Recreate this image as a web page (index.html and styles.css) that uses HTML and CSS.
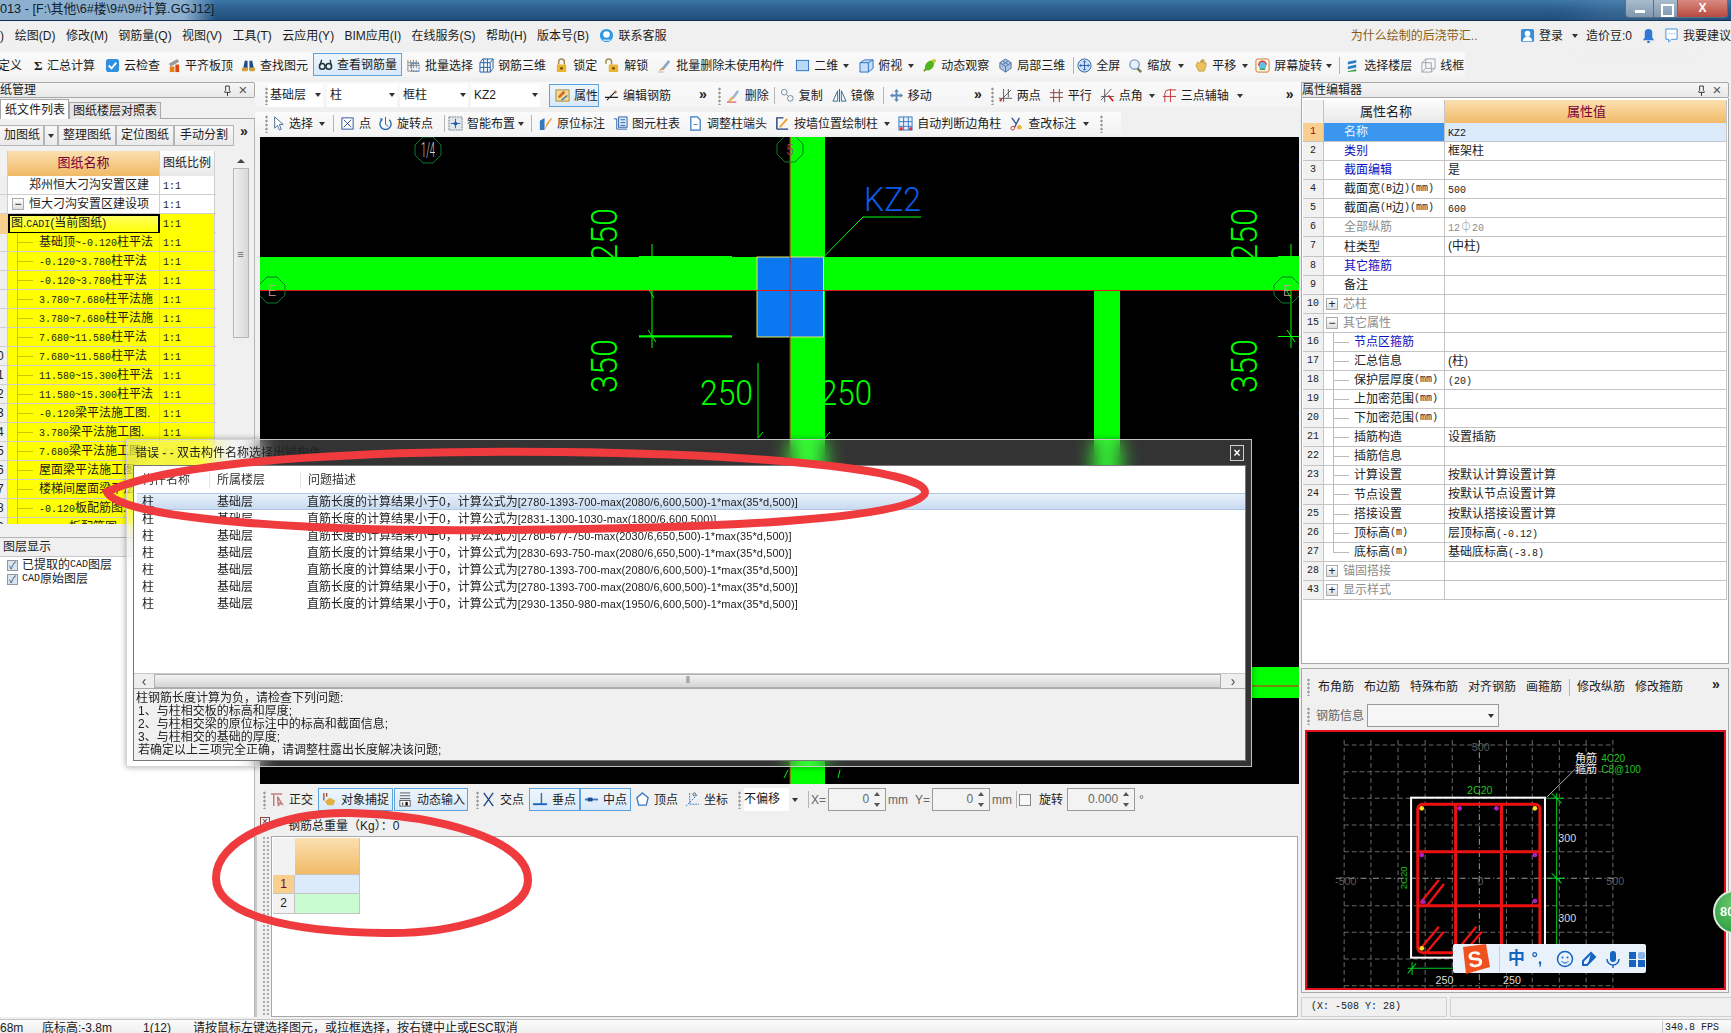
FILE: index.html
```html
<!DOCTYPE html>
<html lang="zh">
<head>
<meta charset="utf-8">
<title>GGJ2013</title>
<link rel="stylesheet" href="styles.css">
</head>
<body>
<svg class="defs" aria-hidden="true">
<symbol id="cloud" viewBox="0 0 16 16"><rect x="1" y="1" width="14" height="14" rx="3" fill="#2f8fe0"/><path d="M4 8l3 3 5-6" stroke="#fff" stroke-width="2" fill="none"/></symbol>
<symbol id="align" viewBox="0 0 16 16"><path d="M3 6l9-5 2 3-9 5z" fill="#9a9a9a"/><rect x="4" y="9" width="5" height="6" fill="#e8801a"/><rect x="10" y="7" width="4" height="8" fill="#d94a12"/></symbol>
<symbol id="binoc" viewBox="0 0 16 16"><path d="M2 13l2-10h3v10zM9 13V3h3l2 10z" fill="#1d4b8f"/><rect x="1" y="10" width="6" height="4" rx="1" fill="#d0a040"/><rect x="9" y="10" width="6" height="4" rx="1" fill="#d0a040"/></symbol>
<symbol id="glass" viewBox="0 0 16 16"><circle cx="4.500" cy="10" r="3" stroke="#233" stroke-width="1.600" fill="none"/><circle cx="11.500" cy="10" r="3" stroke="#233" stroke-width="1.600" fill="none"/><path d="M2 9l2-6M14 9l-1-6" stroke="#233" stroke-width="1.400"/></symbol>
<symbol id="batch" viewBox="0 0 16 16"><path d="M2 2v12h12M5 2v9M8 2v9M11 2v9M2 5h12M2 8h12" stroke="#8c8c8c" fill="none"/><rect x="6" y="6" width="8" height="8" stroke="#2a6fc0" fill="none" stroke-dasharray="2 1"/></symbol>
<symbol id="rebar3" viewBox="0 0 16 16"><path d="M1 5h11v10H1zM1 5l3-4h11l-3 4M15 1v10l-3 4M5 1v14M9 1v14M1 10h11" stroke="#1f5fa8" fill="none"/></symbol>
<symbol id="lock" viewBox="0 0 16 16"><path d="M5 7V4a3 3 0 016 0v3" stroke="#a08a50" stroke-width="1.600" fill="none"/><rect x="3" y="7" width="10" height="8" rx="1" fill="#eab530"/><circle cx="8" cy="11" r="1.500" fill="#7a4a00"/></symbol>
<symbol id="unlock" viewBox="0 0 16 16"><path d="M1 6V4a3 3 0 016 0v3" stroke="#a08a50" stroke-width="1.600" fill="none"/><rect x="4" y="7" width="10" height="8" rx="1" fill="#eab530"/><circle cx="9" cy="11" r="1.500" fill="#7a4a00"/></symbol>
<symbol id="erase" viewBox="0 0 16 16"><path d="M5 11l7-9 2 2-7 9z" fill="#8da3c8"/><path d="M2 14l3-4 2 2z" fill="#e89030"/><path d="M1 15h7" stroke="#bbb"/></symbol>
<symbol id="two" viewBox="0 0 16 16"><rect x="1.500" y="2.500" width="13" height="11" fill="#b8d8f5" stroke="#2a6fc0"/></symbol>
<symbol id="box" viewBox="0 0 16 16"><path d="M1 5l5-3h9v9l-5 4H1z" fill="#c6def5" stroke="#2a6fc0"/><path d="M1 5h9v10M10 5l5-3" stroke="#2a6fc0" fill="none"/></symbol>
<symbol id="orbit" viewBox="0 0 16 16"><path d="M2 14L13 2" stroke="#7a8a20" stroke-width="2"/><ellipse cx="8" cy="8" rx="4" ry="6" transform="rotate(40 8 8)" fill="#4fb51c"/><circle cx="13" cy="3" r="2" fill="#c8d020"/></symbol>
<symbol id="cube" viewBox="0 0 16 16"><path d="M8 1l6 4v6l-6 4-6-4V5z" fill="#a9c4e4" stroke="#52739e"/><path d="M2 5l6 4 6-4M8 9v6M5 3l6 4M11 3L5 7" stroke="#52739e" fill="none"/></symbol>
<symbol id="full" viewBox="0 0 16 16"><circle cx="8" cy="8" r="7" fill="#cfe1f5" stroke="#2a5fa8"/><path d="M8 3v10M3 8h10M6.500 4.500L8 3l1.500 1.500M6.500 11.500L8 13l1.500-1.500M4.500 6.500L3 8l1.500 1.500M11.500 6.500L13 8l-1.500 1.500" stroke="#2a5fa8" fill="none"/></symbol>
<symbol id="zoom" viewBox="0 0 16 16"><circle cx="7" cy="7" r="5" fill="#e8f1fb" stroke="#7f9cc0" stroke-width="1.500"/><path d="M10 11l4 4" stroke="#6a7c40" stroke-width="2.500"/></symbol>
<symbol id="hand" viewBox="0 0 16 16"><path d="M3 8l3 6h6l2-6V5l-2 1V2l-1.500 3V1L9 5V2L7 6 5 4z" fill="#eec25a" stroke="#9a7620" stroke-width=".5"/></symbol>
<symbol id="rot" viewBox="0 0 16 16"><rect x="1" y="1" width="14" height="14" rx="2" fill="#fdf5e8" stroke="#d07030"/><circle cx="8" cy="8" r="4" fill="#5cc0e8"/><path d="M4 8a4 4 0 018-1" stroke="#e03a30" stroke-width="1.500" fill="none"/><path d="M5 12h6" stroke="#3ca030" stroke-width="1.500"/></symbol>
<symbol id="floors" viewBox="0 0 16 16"><path d="M3 4l9-2v3L3 7zM3 9l9-2v3l-9 2z" fill="#2a80c8"/><path d="M3 14l9-2v2l-9 1z" fill="#2fa050"/></symbol>
<symbol id="wire" viewBox="0 0 16 16"><path d="M1 5h10v10H1zM1 5l4-4h10v10l-4 4M5 1v10h10M5 11l-4 4" stroke="#9aa5b0" fill="none"/></symbol>
<symbol id="prop" viewBox="0 0 16 16"><rect x="1" y="2" width="14" height="12" fill="#f2d890" stroke="#a88a40"/><path d="M3 9l6-6 2 2-6 6z" fill="#d06a20"/><path d="M7 13l6-5" stroke="#3a70b0" stroke-width="1.500"/></symbol>
<symbol id="editr" viewBox="0 0 16 16"><path d="M1 10h14M3 13L13 3" stroke="#222" stroke-width="1.200"/><path d="M11 2l3 3-2 1z" fill="#d08020"/></symbol>
<symbol id="del" viewBox="0 0 16 16"><path d="M6 10l6-8 2 2-6 8z" fill="#9db4d4"/><path d="M2 14l4-5 2 2-3 3z" fill="#eeb04a"/><path d="M1 15h10" stroke="#c33"/></symbol>
<symbol id="copy" viewBox="0 0 16 16"><circle cx="4.500" cy="4.500" r="3" stroke="#6a8aaa" fill="none"/><circle cx="11" cy="11" r="3" stroke="#6a8aaa" fill="none"/><path d="M7 7l2 2" stroke="#d08030"/></symbol>
<symbol id="mirror" viewBox="0 0 16 16"><path d="M8 1v14" stroke="#555"/><path d="M6 3v11H1zM10 3v11h5z" fill="none" stroke="#2a6f9f"/></symbol>
<symbol id="move" viewBox="0 0 16 16"><path d="M8 1l2.500 3H9v3h3V5.500L15 8l-3 2.500V9H9v3h1.500L8 15l-2.500-3H7V9H4v1.500L1 8l3-2.500V7h3V4H5.500z" fill="#5c88b5"/></symbol>
<symbol id="twop" viewBox="0 0 16 16"><path d="M2 14L14 2M6 1v14M1 11h14M11 1v9" stroke="#555" fill="none"/><path d="M2 14l2-2" stroke="#c33" stroke-width="2"/></symbol>
<symbol id="para" viewBox="0 0 16 16"><path d="M5 1v14M11 1v14M1 5h14M1 10h14" stroke="#8b3a3a" fill="none"/></symbol>
<symbol id="ang" viewBox="0 0 16 16"><path d="M1 13L12 1M5 1v14M1 9h14" stroke="#555" fill="none"/><path d="M9 8l5 6" stroke="#d02020" stroke-width="1.800"/></symbol>
<symbol id="three" viewBox="0 0 16 16"><path d="M3 15V6a4 4 0 014-4h8M9 1v14M1 9h14" stroke="#c63030" fill="none"/></symbol>
<symbol id="cursor" viewBox="0 0 16 16"><path d="M5 1v12l3-3 2 5 2-1-2-5h4z" fill="#fff" stroke="#4a6a90"/></symbol>
<symbol id="pt" viewBox="0 0 16 16"><rect x="2" y="2" width="12" height="12" fill="#fff" stroke="#2a4f9f"/><path d="M4 4l8 8M12 4l-8 8" stroke="#2a4f9f"/></symbol>
<symbol id="rotp" viewBox="0 0 16 16"><path d="M4 4a6 6 0 108 0" stroke="#2b6ca8" stroke-width="1.500" fill="none"/><path d="M8 1v8l3 2" stroke="#2b6ca8" fill="none"/><path d="M2 2l3 1-1 3z" fill="#2b6ca8"/></symbol>
<symbol id="smart" viewBox="0 0 16 16"><rect x="1" y="1" width="14" height="14" fill="#dfe8f0" stroke="#777" stroke-dasharray="2 1"/><path d="M8 3v10M3 8h10" stroke="#2a5fa8"/><circle cx="8" cy="8" r="2" fill="#2a5fa8"/></symbol>
<symbol id="note" viewBox="0 0 16 16"><path d="M2 15V5l5-3v13z" fill="#3478c0"/><path d="M7 15l2-7 5-6 1 1-5 7z" fill="#f0a030"/></symbol>
<symbol id="table" viewBox="0 0 16 16"><rect x="6" y="1" width="9" height="11" fill="#dce9f8" stroke="#2a5fa8"/><path d="M8 4h5M8 7h5M8 10h5" stroke="#2a5fa8"/><path d="M1 3h3v11h11" stroke="#2a5fa8" fill="none"/></symbol>
<symbol id="page" viewBox="0 0 16 16"><path d="M3 1h7l3 3v11H3z" fill="#fff" stroke="#3478c0" stroke-width="1.300"/><path d="M6 9h4" stroke="#3478c0"/></symbol>
<symbol id="wall" viewBox="0 0 16 16"><path d="M2 14V2h7M2 14h12" stroke="#223c80" fill="none" stroke-width="1.500"/><path d="M5 12l8-9" stroke="#eda020" stroke-width="2"/></symbol>
<symbol id="auto" viewBox="0 0 16 16"><rect x="1" y="1" width="14" height="14" fill="#e8f0fa" stroke="#3478c0"/><path d="M1 6h14M1 11h14M6 1v14M11 1v14" stroke="#3478c0"/><rect x="2" y="12" width="3" height="3" fill="#d33"/><rect x="12" y="12" width="3" height="3" fill="#d33"/></symbol>
<symbol id="chk" viewBox="0 0 16 16"><path d="M3 2l5 7M11 2L6 12" stroke="#35558a" stroke-width="1.500"/><circle cx="4" cy="13" r="2" fill="none" stroke="#c33"/><circle cx="11" cy="12" r="2.500" fill="#eab530"/></symbol>
<symbol id="ortho" viewBox="0 0 16 16"><path d="M1 2h12M4 2v13M8 5l5 8-3-1-1 3z" stroke="#c08080" stroke-width="1.600" fill="none"/></symbol>
<symbol id="snap" viewBox="0 0 16 16"><path d="M2 1v8M5 1v4" stroke="#a05030" stroke-width="1.400"/><path d="M3 10l5-4 6 3-2 5H6z" fill="#e2b040"/></symbol>
<symbol id="dyn" viewBox="0 0 16 16"><path d="M2 1h11M2 4h11M2 7h11" stroke="#555" fill="none"/><rect x="2" y="9" width="11" height="6" fill="#fff" stroke="#555"/><path d="M5 11v3M8 11h2v3H8" stroke="#222"/></symbol>
<symbol id="cross" viewBox="0 0 16 16"><path d="M3 1l10 14M13 1L3 15" stroke="#234a8a" stroke-width="1.500"/></symbol>
<symbol id="perp" viewBox="0 0 16 16"><path d="M9 1v12" stroke="#4a6a8a" stroke-width="1.500"/><path d="M0 13h15" stroke="#1864c0" stroke-width="2"/></symbol>
<symbol id="mid" viewBox="0 0 16 16"><path d="M1 8h14" stroke="#3478c0" stroke-width="2"/><rect x="4" y="6" width="5" height="4" fill="#1d4b8f"/></symbol>
<symbol id="vert" viewBox="0 0 16 16"><path d="M8 1l6 5-2 8H4L2 6z" fill="#fff" stroke="#3478c0" stroke-width="1.400"/></symbol>
<symbol id="coord" viewBox="0 0 16 16"><path d="M5 1v12h10" stroke="#3478c0" fill="none" stroke-dasharray="2 1"/><path d="M1 15L13 3" stroke="#3478c0" stroke-dasharray="2 1"/><circle cx="10" cy="2.500" r="1.500" fill="none" stroke="#555"/></symbol>
<symbol id="pin" viewBox="0 0 10 12"><path d="M3 1h4v5l1 1v1H2V7l1-1zM5 8v4" stroke="#222" fill="#fff"/></symbol>
</svg>

<div class="app">
  <header class="title">
    <div class="title-glass">013 - [F:\其他\6#楼\9#\9#计算.GGJ12]</div>
    <div class="winctl"><span class="w-min"></span><span class="w-max"></span><span class="w-close">X</span></div>
  </header>

  <nav class="menu">
    <span class="mi-cut">)</span>
    <span class="mi">绘图(D)</span><span class="mi">修改(M)</span><span class="mi">钢筋量(Q)</span><span class="mi">视图(V)</span><span class="mi">工具(T)</span><span class="mi">云应用(Y)</span><span class="mi">BIM应用(I)</span><span class="mi">在线服务(S)</span><span class="mi">帮助(H)</span><span class="mi">版本号(B)</span>
    <span class="mi svc"><svg class="ic" viewBox="0 0 16 16"><circle cx="8" cy="8" r="7" fill="#2f9ae0"/><circle cx="8" cy="7" r="3.500" fill="#fff"/><path d="M4 13h8" stroke="#fff"/></svg>联系客服</span>
    <span class="news">为什么绘制的后浇带汇..</span>
    <span class="login"><svg class="ic" viewBox="0 0 16 16"><rect x="1" y="1" width="14" height="14" rx="2" fill="#3c8ed8"/><circle cx="8" cy="6" r="3" fill="#fff"/><path d="M3 14a5 5 0 0110 0z" fill="#fff"/></svg>登录</span><i class="ar m9"></i>
    <span class="beans">造价豆:0</span>
    <svg class="ic bell" viewBox="0 0 16 16"><path d="M8 1a4 4 0 00-4 4v5l-2 3h12l-2-3V5a4 4 0 00-4-4z" fill="#2f78d8"/><circle cx="8" cy="15" r="1.500" fill="#2f78d8"/></svg>
    <span class="suggest"><svg class="ic" viewBox="0 0 16 16"><path d="M2 1h12v11H8l-3 3v-3H2z" fill="#fff" stroke="#3c8ed8"/><path d="M5 6h1M8 6h1M11 6h1" stroke="#3c8ed8"/></svg>我要建议</span>
  </nav>

  <div class="tb1"><div class="tb1-in">
    <span class="ti cut">定义</span>
    <span class="ti m12"><b class="sigma">Σ</b>汇总计算</span>
    <span class="ti m10"><svg class="ic"><use href="#cloud"/></svg>云检查</span>
    <span class="ti m6"><svg class="ic"><use href="#align"/></svg>平齐板顶</span>
    <span class="ti m8"><svg class="ic"><use href="#binoc"/></svg>查找图元</span>
    <span class="ti btn m5"><svg class="ic"><use href="#glass"/></svg>查看钢筋量</span>
    <span class="ti m4"><svg class="ic"><use href="#batch"/></svg>批量选择</span>
    <span class="ti m6"><svg class="ic"><use href="#rebar3"/></svg>钢筋三维</span>
    <span class="ti m8"><svg class="ic"><use href="#lock"/></svg>锁定</span>
    <span class="ti m8"><svg class="ic"><use href="#unlock"/></svg>解锁</span>
    <span class="ti m9"><svg class="ic"><use href="#erase"/></svg>批量删除未使用构件</span>
    <span class="ti m11"><svg class="ic"><use href="#two"/></svg>二维</span><i class="ar m5"></i>
    <span class="ti m10"><svg class="ic"><use href="#box"/></svg>俯视</span><i class="ar m6"></i>
    <span class="ti m8"><svg class="ic"><use href="#orbit"/></svg>动态观察</span>
    <span class="ti m9"><svg class="ic"><use href="#cube"/></svg>局部三维</span>
    <i class="sep m8"></i>
    <span class="ti m3"><svg class="ic"><use href="#full"/></svg>全屏</span>
    <span class="ti m8"><svg class="ic"><use href="#zoom"/></svg>缩放</span><i class="ar m7"></i>
    <span class="ti m9"><svg class="ic"><use href="#hand"/></svg>平移</span><i class="ar m6"></i>
    <span class="ti m7"><svg class="ic"><use href="#rot"/></svg>屏幕旋转</span><i class="ar m4"></i>
    <i class="sep m7"></i>
    <span class="ti m5"><svg class="ic"><use href="#floors"/></svg>选择楼层</span>
    <span class="ti m9"><svg class="ic"><use href="#wire"/></svg>线框</span>
  </div></div>

  <main class="main">
    <aside class="left">
      <div class="ph"><span class="ph-t cutl">纸管理</span><svg class="pin" viewBox="0 0 10 12"><use href="#pin"/></svg><span class="ph-x">×</span></div>
      <div class="tabs"><span class="tab on">纸文件列表</span><span class="tab">图纸楼层对照表</span></div>
      <div class="ltb"><span class="lb b1">加图纸</span><span class="lb b2"><i class="ar"></i></span><span class="lb b3">整理图纸</span><span class="lb b3">定位图纸</span><span class="lb b3 b4">手动分割</span><span class="more">»</span></div>
      <div class="sheet">
        <div class="sgrid">
          <div class="sr sh"><i class="rn"></i><span class="sn">图纸名称</span><span class="ss">图纸比例</span></div>
          <div class="sr"><i class="rn"></i><span class="sn l1">郑州恒大刁沟安置区建</span><span class="ss"><u>1:1</u></span></div>
          <div class="sr"><i class="rn"></i><span class="sn l1"><i class="tog">−</i>恒大刁沟安置区建设项</span><span class="ss"><u>1:1</u></span></div>
          <div class="sr y cur"><i class="rn"></i><span class="sn l0">图.<u>CADI</u>(当前图纸)</span><span class="ss"><u>1:1</u></span></div>
          <div class="sr y"><i class="rn"></i><span class="sn ch">基础顶<u>~-0.120</u>柱平法</span><span class="ss"><u>1:1</u></span></div>
          <div class="sr y"><i class="rn"></i><span class="sn ch"><u>-0.120~3.780</u>柱平法</span><span class="ss"><u>1:1</u></span></div>
          <div class="sr y"><i class="rn"></i><span class="sn ch"><u>-0.120~3.780</u>柱平法</span><span class="ss"><u>1:1</u></span></div>
          <div class="sr y"><i class="rn"></i><span class="sn ch"><u>3.780~7.680</u>柱平法施</span><span class="ss"><u>1:1</u></span></div>
          <div class="sr y"><i class="rn"></i><span class="sn ch"><u>3.780~7.680</u>柱平法施</span><span class="ss"><u>1:1</u></span></div>
          <div class="sr y"><i class="rn"></i><span class="sn ch"><u>7.680~11.580</u>柱平法</span><span class="ss"><u>1:1</u></span></div>
          <div class="sr y"><i class="rn">0</i><span class="sn ch"><u>7.680~11.580</u>柱平法</span><span class="ss"><u>1:1</u></span></div>
          <div class="sr y"><i class="rn">1</i><span class="sn ch"><u>11.580~15.300</u>柱平法</span><span class="ss"><u>1:1</u></span></div>
          <div class="sr y"><i class="rn">2</i><span class="sn ch"><u>11.580~15.300</u>柱平法</span><span class="ss"><u>1:1</u></span></div>
          <div class="sr y"><i class="rn">3</i><span class="sn ch"><u>-0.120</u>梁平法施工图.</span><span class="ss"><u>1:1</u></span></div>
          <div class="sr y"><i class="rn">4</i><span class="sn ch"><u>3.780</u>梁平法施工图.</span><span class="ss"><u>1:1</u></span></div>
          <div class="sr y"><i class="rn">5</i><span class="sn ch"><u>7.680</u>梁平法施工图.</span><span class="ss"><u>1:1</u></span></div>
          <div class="sr y"><i class="rn">6</i><span class="sn ch">屋面梁平法施工图</span><span class="ss"><u>1:1</u></span></div>
          <div class="sr y"><i class="rn">7</i><span class="sn ch">楼梯间屋面梁平法</span><span class="ss"><u>1:1</u></span></div>
          <div class="sr y"><i class="rn">8</i><span class="sn ch"><u>-0.120</u>板配筋图.</span><span class="ss"><u>1:1</u></span></div>
          <div class="sr y"><i class="rn">9</i><span class="sn ch"><u>3.780</u>板配筋图.</span><span class="ss"><u>1:1</u></span></div>
        </div>
        <div class="vscroll"><i class="up"></i><i class="thumb">≡</i></div>
      </div>
      <div class="ph ph2"><span class="ph-t">图层显示</span></div>
      <div class="layers">
        <label class="lay"><i class="cb">✓</i>已提取的<u>CAD</u>图层</label>
        <label class="lay"><i class="cb">✓</i><u>CAD</u>原始图层</label>
      </div>
    </aside>

    <section class="center">
      <div class="bar r2">
        <i class="grip g10"></i>
        <span class="combo c1">基础层<i class="ar"></i></span><span class="combo c2">柱<i class="ar"></i></span><span class="combo c3">框柱<i class="ar"></i></span><span class="combo c4">KZ2<i class="ar"></i></span>
        <span class="ti btn m9 bp"><svg class="ic"><use href="#prop"/></svg>属性</span>
        <span class="ti m5"><svg class="ic"><use href="#editr"/></svg>编辑钢筋</span>
        <span class="more m28">»</span>
        <i class="grip m11"></i>
        <span class="ti m5"><svg class="ic"><use href="#del"/></svg>删除</span><i class="sep m5"></i>
        <span class="ti m5"><svg class="ic"><use href="#copy"/></svg>复制</span>
        <span class="ti m9"><svg class="ic"><use href="#mirror"/></svg>镜像</span><i class="sep m8"></i>
        <span class="ti m5"><svg class="ic"><use href="#move"/></svg>移动</span>
        <span class="more m42">»</span>
        <i class="grip m9"></i>
        <span class="ti m4"><svg class="ic"><use href="#twop"/></svg>两点</span>
        <span class="ti m8"><svg class="ic"><use href="#para"/></svg>平行</span>
        <span class="ti m8"><svg class="ic"><use href="#ang"/></svg>点角</span><i class="ar m6"></i>
        <span class="ti m7"><svg class="ic"><use href="#three"/></svg>三点辅轴</span><i class="ar m8"></i>
        <span class="more m43">»</span>
      </div>
      <div class="bar r3">
        <i class="grip g11"></i>
        <span class="ti m2"><svg class="ic"><use href="#cursor"/></svg>选择</span><i class="ar m6"></i><i class="sep m8"></i>
        <span class="ti m6"><svg class="ic"><use href="#pt"/></svg>点</span>
        <span class="ti m7"><svg class="ic"><use href="#rotp"/></svg>旋转点</span><i class="sep m11"></i>
        <span class="ti m3"><svg class="ic"><use href="#smart"/></svg>智能布置</span><i class="ar m3"></i><i class="sep m7"></i>
        <span class="ti m6"><svg class="ic"><use href="#note"/></svg>原位标注</span>
        <span class="ti m8"><svg class="ic"><use href="#table"/></svg>图元柱表</span>
        <span class="ti m8"><svg class="ic"><use href="#page"/></svg>调整柱端头</span>
        <span class="ti m8"><svg class="ic"><use href="#wall"/></svg>按墙位置绘制柱</span><i class="ar m6"></i>
        <span class="ti m8"><svg class="ic"><use href="#auto"/></svg>自动判断边角柱</span>
        <span class="ti m8"><svg class="ic"><use href="#chk"/></svg>查改标注</span><i class="ar m7"></i>
        <i class="grip m11"></i>
      </div>

      <svg class="cad" viewBox="260 137 1039 647" width="1039" height="647">
        <defs><polygon id="oct" points="-5,-13 5,-13 13,-5 13,5 5,13 -5,13 -13,5 -13,-5" fill="none" stroke="#0a7a2a"/></defs>
        <g fill="#00ff00">
          <rect x="260" y="257" width="1040" height="34"/>
          <rect x="639" y="256" width="93" height="3"/>
          <rect x="790" y="137" width="35" height="647"/>
          <rect x="1094" y="291" width="26" height="210"/>
          <rect x="1252" y="667" width="48" height="31"/>
          <rect x="1278" y="256" width="22" height="3"/>
        </g>
        <rect x="757" y="257" width="66.500" height="80" fill="#0a78f0" stroke="#e8e860"/>
        <path d="M260 290.500H1300M790 137V784M1252 686H1300" stroke="#e01818" fill="none"/>
        <g stroke="#00ff00" fill="none">
          <path d="M652 244V348M639 336H732" />
          <path d="M639 336.500H732" stroke-width="2"/>
          <path d="M648 330L656 342M648 288L654 298M1285 288L1291 298M1287 330L1295 342"/>
          <path d="M758 363V438M825 438L830 432M758 438L763 432"/>
          <path d="M1291 244V348M1278 336.500H1300" />
          <path d="M823.500 257L863 217H921" stroke-width="1"/>
          <path d="M788 770L784 778M840 770L838 778"/>
        </g>
        <g fill="#00ff00" class="cad-l">
          <text transform="translate(617,262) rotate(-90)" font-size="37" textLength="54" lengthAdjust="spacingAndGlyphs">250</text>
          <text transform="translate(617,393) rotate(-90)" font-size="37" textLength="54" lengthAdjust="spacingAndGlyphs">350</text>
          <text transform="translate(1257,262) rotate(-90)" font-size="37" textLength="54" lengthAdjust="spacingAndGlyphs">250</text>
          <text transform="translate(1257,393) rotate(-90)" font-size="37" textLength="54" lengthAdjust="spacingAndGlyphs">350</text>
          <text x="700" y="405" font-size="35" textLength="53" lengthAdjust="spacingAndGlyphs">250</text>
          <text x="820" y="405" font-size="35" textLength="52" lengthAdjust="spacingAndGlyphs">250</text>
        </g>
        <text x="864" y="211" font-size="34" textLength="57" lengthAdjust="spacingAndGlyphs" fill="#0a5ce6" class="cad-l">KZ2</text>
        <use href="#oct" x="428" y="150"/><use href="#oct" x="790" y="149"/><use href="#oct" x="272" y="290"/><use href="#oct" x="1287" y="290"/>
        <text x="428" y="157" font-size="20" text-anchor="middle" fill="#ddd" textLength="14" lengthAdjust="spacingAndGlyphs" class="cad-l">1/4</text>
        <text x="790" y="155" font-size="15" text-anchor="middle" fill="#a04878" class="cad-l">5</text>
        <text x="272" y="296" font-size="15" text-anchor="middle" fill="#c8a0a0" class="cad-l">E</text>
        <text x="1287" y="296" font-size="15" text-anchor="middle" fill="#c8a0a0" class="cad-l">E</text>
      </svg>

      <div class="bar r4">
        <i class="grip g8"></i>
        <span class="ti m4"><svg class="ic"><use href="#ortho"/></svg>正交</span>
        <span class="ti btn m5 w75"><svg class="ic ic-a"><use href="#snap"/></svg>对象捕捉</span>
        <span class="ti btn m1 w74"><svg class="ic ic-a"><use href="#dyn"/></svg>动态输入</span>
        <i class="grip m8"></i>
        <span class="ti m2"><svg class="ic"><use href="#cross"/></svg>交点</span>
        <span class="ti btn m5 w51"><svg class="ic ic-a"><use href="#perp"/></svg>垂点</span>
        <span class="ti btn w51"><svg class="ic ic-a"><use href="#mid"/></svg>中点</span>
        <span class="ti m4"><svg class="ic"><use href="#vert"/></svg>顶点</span>
        <span class="ti m7"><svg class="ic"><use href="#coord"/></svg>坐标</span>
        <i class="grip m10"></i>
        <span class="combo c5 m3">不偏移</span><i class="ar m3"></i><i class="sep m10"></i>
        <span class="lbl m2">X=</span><span class="spin m2 s58">0<i class="sp"></i></span><span class="lbl m2">mm</span>
        <span class="lbl m7">Y=</span><span class="spin m2 s58">0<i class="sp"></i></span><span class="lbl m2">mm</span>
        <i class="sep m4"></i><i class="box m2"></i>
        <span class="lbl blk m8">旋转</span><span class="spin m4 s68">0.000<i class="sp"></i></span><span class="lbl m4">°</span>
      </div>
      <div class="wline"><i class="xbox">×</i><span class="wtxt">钢筋总重量（Kg）：0</span></div>
      <div class="tablerow">
        <i class="dots"></i>
        <div class="tpanel">
          <div class="tg">
            <i class="tc th0"></i><i class="tc th1"></i>
            <i class="tc n1">1</i><i class="tc v1"></i>
            <i class="tc n2">2</i><i class="tc v2"></i>
          </div>
        </div>
      </div>
    </section>

    <aside class="right">
      <div class="ph rp"><span class="ph-t">属性编辑器</span><svg class="pin" viewBox="0 0 10 12"><use href="#pin"/></svg><span class="ph-x">×</span></div>
      <div class="pbox">
        <div class="pgrid">
          <div class="pr phd"><span class="pn"></span><span class="pk">属性名称</span><span class="pv">属性值</span></div>
          <div class="pr sel"><span class="pn">1</span><span class="pk">名称</span><span class="pv"><u>KZ2</u></span></div>
          <div class="pr"><span class="pn">2</span><span class="pk bl">类别</span><span class="pv">框架柱</span></div>
          <div class="pr"><span class="pn">3</span><span class="pk bl">截面编辑</span><span class="pv">是</span></div>
          <div class="pr"><span class="pn">4</span><span class="pk">截面宽<u>(B</u>边<u>)(mm)</u></span><span class="pv"><u>500</u></span></div>
          <div class="pr"><span class="pn">5</span><span class="pk">截面高<u>(H</u>边<u>)(mm)</u></span><span class="pv"><u>600</u></span></div>
          <div class="pr"><span class="pn">6</span><span class="pk gr">全部纵筋</span><span class="pv gr"><u>12</u>⏀<u>20</u></span></div>
          <div class="pr"><span class="pn">7</span><span class="pk">柱类型</span><span class="pv">(中柱)</span></div>
          <div class="pr"><span class="pn">8</span><span class="pk bl">其它箍筋</span><span class="pv"></span></div>
          <div class="pr"><span class="pn">9</span><span class="pk">备注</span><span class="pv"></span></div>
          <div class="pr"><span class="pn">10</span><span class="pk gr"><i class="tog">+</i>芯柱</span><span class="pv"></span></div>
          <div class="pr"><span class="pn">15</span><span class="pk gr"><i class="tog">−</i>其它属性</span><span class="pv"></span></div>
          <div class="pr"><span class="pn">16</span><span class="pk kid bl">节点区箍筋</span><span class="pv"></span></div>
          <div class="pr"><span class="pn">17</span><span class="pk kid">汇总信息</span><span class="pv">(柱)</span></div>
          <div class="pr"><span class="pn">18</span><span class="pk kid">保护层厚度<u>(mm)</u></span><span class="pv"><u>(20)</u></span></div>
          <div class="pr"><span class="pn">19</span><span class="pk kid">上加密范围<u>(mm)</u></span><span class="pv"></span></div>
          <div class="pr"><span class="pn">20</span><span class="pk kid">下加密范围<u>(mm)</u></span><span class="pv"></span></div>
          <div class="pr"><span class="pn">21</span><span class="pk kid">插筋构造</span><span class="pv">设置插筋</span></div>
          <div class="pr"><span class="pn">22</span><span class="pk kid">插筋信息</span><span class="pv"></span></div>
          <div class="pr"><span class="pn">23</span><span class="pk kid">计算设置</span><span class="pv">按默认计算设置计算</span></div>
          <div class="pr"><span class="pn">24</span><span class="pk kid">节点设置</span><span class="pv">按默认节点设置计算</span></div>
          <div class="pr"><span class="pn">25</span><span class="pk kid">搭接设置</span><span class="pv">按默认搭接设置计算</span></div>
          <div class="pr"><span class="pn">26</span><span class="pk kid">顶标高<u>(m)</u></span><span class="pv">层顶标高<u>(-0.12)</u></span></div>
          <div class="pr"><span class="pn">27</span><span class="pk kid last">底标高<u>(m)</u></span><span class="pv">基础底标高<u>(-3.8)</u></span></div>
          <div class="pr"><span class="pn">28</span><span class="pk gr"><i class="tog">+</i>锚固搭接</span><span class="pv"></span></div>
          <div class="pr"><span class="pn">43</span><span class="pk gr"><i class="tog">+</i>显示样式</span><span class="pv"></span></div>
        </div>
      </div>
      <div class="rebar">
        <div class="rb-tb"><i class="grip"></i><span>布角筋</span><span>布边筋</span><span>特殊布筋</span><span>对齐钢筋</span><span>画箍筋</span><i class="sep"></i><span>修改纵筋</span><span>修改箍筋</span><span class="more rb-more">»</span></div>
        <div class="rb-tb2"><i class="grip"></i><span class="rb-l">钢筋信息</span><span class="rb-combo"><i class="ar"></i></span></div>
        <svg class="rb-cv" viewBox="54 216 1246 768" preserveAspectRatio="none">
          <g stroke="#6a6a6a" stroke-width="3" stroke-dasharray="14 9" fill="none">
            <path d="M165 240V985M245 240V985M326 240V985M407 240V985M488 240V985M650 240V985M727 240V985M808 240V985M888 240V985M968 240V985"/>
            <path d="M165 255H968M165 335H968M165 415H968M165 495H968M165 575H968M165 737H968M165 817H968M165 897H968M165 977H968"/>
          </g>
          <path d="M569 240V985M140 655H985" stroke="#999" stroke-width="3" stroke-dasharray="18 8 3 8" fill="none"/>
          <g class="cad-t" fill="#5c5c5c" font-size="32" text-anchor="middle">
            <text x="573" y="273">500</text><text x="170" y="675">-500</text><text x="572" y="675">0</text><text x="975" y="675">500</text>
          </g>
          <rect x="365" y="413" width="400" height="480" fill="none" stroke="#fff" stroke-width="6"/>
          <path d="M770 412L855 328" stroke="#fff" stroke-width="2"/>
          <g fill="none" stroke="#ee1111" stroke-width="9">
            <rect x="385" y="433" width="365" height="445" rx="14"/>
            <path d="M498 433V878M635 433V878M385 575H750M385 737H750"/>
            <path d="M392 730L448 660M412 738L463 672M392 868L448 800M412 876L463 815M505 868L560 800M525 876L577 815" stroke-width="7"/>
          </g>
          <g fill="#ffe020"><circle cx="397" cy="445" r="7"/><circle cx="735" cy="445" r="7"/><circle cx="397" cy="865" r="7"/></g>
          <g fill="#b020c8"><circle cx="510" cy="445" r="7"/><circle cx="620" cy="445" r="7"/><circle cx="397" cy="585" r="7"/><circle cx="735" cy="585" r="7"/><circle cx="400" cy="725" r="7"/><circle cx="735" cy="723" r="7"/></g>
          <g stroke="#00d020" stroke-width="3" fill="none"><path d="M800 400V860M775 415H820M775 655H825M355 925H495M368 905V945M785 400L815 430M785 640L815 670M355 940L380 910"/></g>
          <g class="cad-t" font-size="32">
            <text x="805" y="546" fill="#ddd">300</text><text x="805" y="786" fill="#ddd">300</text>
            <text x="438" y="972" fill="#ddd">250</text><text x="640" y="972" fill="#ddd">250</text>
            <text x="532" y="402" fill="#22c022">2C20</text>
            <text transform="translate(354,688) rotate(-90)" fill="#22c022" font-size="29">2C20</text>
            <text x="933" y="305" fill="#22c022" font-size="30">4C20</text>
            <text x="933" y="339" fill="#22c022" font-size="30">C8@100</text>
          </g>
          <g class="cad-c" font-size="33" fill="#eee"><text x="855" y="306">角筋</text><text x="855" y="340">箍筋</text></g>
        </svg>
      </div>
      <div class="coords"><span class="co1">(X: -508 Y: 28)</span><span class="co2"></span></div>
    </aside>
  </main>

  <footer class="status">
    <span class="st st0">68m</span><span class="st st1">底标高:-3.8m</span><span class="st st2">1(12)</span>
    <span class="st st3">请按鼠标左键选择图元，或拉框选择，按右键中止或ESC取消</span>
    <span class="st st4">340.8 FPS</span>
  </footer>

  <div class="dialog">
    <div class="dl-title"><span>错误 - - 双击构件名称选择出错构件</span><i class="dl-x">×</i></div>
    <div class="dl-in">
      <div class="dl-list">
        <div class="dl-h"><span class="c-a">构件名称</span><span class="c-b">所属楼层</span><span class="c-c">问题描述</span></div>
        <div class="dl-r on"><span class="c-a">柱</span><span class="c-b">基础层</span><span class="c-c">直筋长度的计算结果小于0，计算公式为<b class="f">[2780-1393-700-max(2080/6,600,500)-1*max(35*d,500)]</b></span></div>
        <div class="dl-r"><span class="c-a">柱</span><span class="c-b">基础层</span><span class="c-c">直筋长度的计算结果小于0，计算公式为<b class="f">[2831-1300-1030-max(1800/6,600,500)]</b></span></div>
        <div class="dl-r"><span class="c-a">柱</span><span class="c-b">基础层</span><span class="c-c">直筋长度的计算结果小于0，计算公式为<b class="f">[2780-677-750-max(2030/6,650,500)-1*max(35*d,500)]</b></span></div>
        <div class="dl-r"><span class="c-a">柱</span><span class="c-b">基础层</span><span class="c-c">直筋长度的计算结果小于0，计算公式为<b class="f">[2830-693-750-max(2080/6,650,500)-1*max(35*d,500)]</b></span></div>
        <div class="dl-r"><span class="c-a">柱</span><span class="c-b">基础层</span><span class="c-c">直筋长度的计算结果小于0，计算公式为<b class="f">[2780-1393-700-max(2080/6,600,500)-1*max(35*d,500)]</b></span></div>
        <div class="dl-r"><span class="c-a">柱</span><span class="c-b">基础层</span><span class="c-c">直筋长度的计算结果小于0，计算公式为<b class="f">[2780-1393-700-max(2080/6,600,500)-1*max(35*d,500)]</b></span></div>
        <div class="dl-r"><span class="c-a">柱</span><span class="c-b">基础层</span><span class="c-c">直筋长度的计算结果小于0，计算公式为<b class="f">[2930-1350-980-max(1950/6,600,500)-1*max(35*d,500)]</b></span></div>
      </div>
      <div class="dl-sc"><i class="dl-l">‹</i><i class="dl-th">⦀</i><i class="dl-rr">›</i></div>
      <div class="dl-msg">
        <p>柱钢筋长度计算为负，请检查下列问题:</p>
        <p class="ind">1、与柱相交板的标高和厚度;</p>
        <p class="ind">2、与柱相交梁的原位标注中的标高和截面信息;</p>
        <p class="ind">3、与柱相交的基础的厚度;</p>
        <p class="ind">若确定以上三项完全正确，请调整柱露出长度解决该问题;</p>
      </div>
    </div>
  </div>

  <svg class="scrawl" viewBox="0 0 1731 1033" width="1731" height="1033" aria-hidden="true">
    <path d="M107 492C180 457 400 450 560 452C760 454 925 470 925 492C925 512 800 528 500 530C320 532 120 520 107 492Z"/>
    <path d="M216 878C216 840 280 812 350 813C440 815 528 840 528 880C528 915 450 934 385 933C290 932 216 915 216 878Z"/>
  </svg>

  <div class="ime">
    <svg class="ime-s" viewBox="0 0 32 30"><path d="M5 3L28 0l4 23-24 7z" fill="#f0501e"/><text x="10" y="23" font-size="22" font-weight="700" fill="#fff" class="cad-t" transform="rotate(-10 16 16)">S</text></svg>
    <i class="ime-d"></i>
    <span class="ime-t">中</span><span class="ime-p">°,</span>
    <svg class="ime-i" viewBox="0 0 18 18"><circle cx="9" cy="9" r="7.500" fill="none" stroke="#1565c0" stroke-width="1.500"/><circle cx="6.500" cy="7.500" r="1" fill="#1565c0"/><circle cx="11.500" cy="7.500" r="1" fill="#1565c0"/><path d="M5.500 11a4 4 0 007 0" stroke="#1565c0" fill="none"/></svg>
    <svg class="ime-i" viewBox="0 0 18 18"><path d="M3 11L11 3l4 4-8 8H3z" fill="none" stroke="#1565c0" stroke-width="2"/><path d="M8 14l7-7-4-4z" fill="#1565c0"/></svg>
    <svg class="ime-i" viewBox="0 0 18 18"><rect x="6" y="1" width="6" height="11" rx="3" fill="#1565c0"/><path d="M3 9a6 6 0 0012 0M9 15v3" stroke="#1565c0" fill="none" stroke-width="1.500"/></svg>
    <svg class="ime-i" viewBox="0 0 18 18"><rect x="1" y="2" width="7" height="7" fill="#1565c0"/><rect x="10" y="2" width="7" height="7" rx="2" fill="#89b4e8"/><rect x="1" y="10" width="7" height="7" fill="#1565c0"/><rect x="10" y="10" width="7" height="7" fill="#1565c0"/></svg>
  </div>
  <div class="ball">80</div>
</div>
</body>
</html>
```

FILE: styles.css
```css
* { box-sizing: border-box; }
html, body { margin: 0; padding: 0; }
body { width: 1731px; height: 1033px; overflow: hidden; background: #f0f0f0; color: #1c1c1c;
  font: 12px/16px "Liberation Sans", "Noto Sans CJK SC", sans-serif; }
i { font-style: normal; }
u { text-decoration: none; font-family: "Liberation Mono", "Noto Sans CJK SC", monospace; font-size: 10px; }
p { margin: 0; }
.defs { position: absolute; width: 0; height: 0; }
.app { position: relative; width: 1731px; height: 1033px; display: flex; flex-direction: column; overflow: hidden; }

/* margins */
.m1{margin-left:1px}.m2{margin-left:2px}.m3{margin-left:3px}.m4{margin-left:4px}.m5{margin-left:5px}.m6{margin-left:6px}.m7{margin-left:7px}.m8{margin-left:8px}.m9{margin-left:9px}.m10{margin-left:10px}.m11{margin-left:11px}.m12{margin-left:12px}.m28{margin-left:28px}.m42{margin-left:42px}.m43{margin-left:43px}

/* title */
.title { height: 21px; flex: none; display: flex; align-items: flex-start; border-bottom: 1px solid #0e2f50;
  background: linear-gradient(#3d76a8, #2a5d8c 50%, #214f7c); }
.title-glass { width: 216px; height: 20px; line-height: 18px; font-size: 12.7px; color: #10202c; white-space: nowrap;
  background: linear-gradient(90deg, #8db0ce 85%, rgba(141,176,206,0)); }
.winctl { margin-left: auto; margin-right: 3px; display: flex; height: 18px; border: 1px solid #56708a; border-top: 0; border-radius: 0 0 4px 4px; overflow: hidden;
  box-shadow: -40px 0 40px rgba(180,210,235,.35); }
.w-min, .w-max { width: 28px; background: linear-gradient(#a9bccd, #7f97ad); border-right: 1px solid #56708a; position: relative; }
.w-max { width: 24px; }
.w-min::after { content: ""; position: absolute; left: 9px; top: 10px; width: 10px; height: 3px; background: #fff; }
.w-max::after { content: ""; position: absolute; left: 7px; top: 4px; width: 9px; height: 9px; border: 2px solid #fff; }
.w-close { width: 49px; text-align: center; color: #fff; font-weight: 700; line-height: 16px; background: linear-gradient(#d88a80, #b84a40); }

/* menu */
.menu { height: 31px; flex: none; display: flex; align-items: center; background: #f0f0f0; white-space: nowrap; padding-bottom: 2px; }
.mi-cut { width: 15px; }
.mi { margin-right: 10.400px; }
.svc { display: flex; align-items: center; margin-left: 0; }
.ic { width: 15px; height: 15px; margin-right: 4px; flex: none; display: block; }
.news { margin-left: 674px; color: #8a5a10; width: 171px; }
.login { display: flex; align-items: center; }
.ar { display: inline-block; flex: none; width: 0; height: 0; border: 3px solid transparent; border-top: 4px solid #333; border-bottom: 0; }
.beans { margin-left: 8px; }
.bell { margin-left: 9px; margin-right: 0; }
.suggest { display: flex; align-items: center; margin-left: 8px; }

/* toolbars */
.tb1 { height: 30px; flex: none; padding-bottom: 5px; overflow: hidden; }
.tb1-in { width: 1465px; height: 25px; padding-top: 2px; display: flex; align-items: center; background: linear-gradient(#fafafa, #f4f4f4); white-space: nowrap; }
.ti { display: inline-flex; align-items: center; flex: none; white-space: nowrap; }
.cut { margin-left: -2px; }
.sigma { width: 13px; font: 700 13px "Liberation Serif", serif; margin-right: 0; }
.btn { height: 23px; padding: 0 4px 0 4px; border: 1px solid #5da2dc; background: linear-gradient(#eef6fd, #d8e9f9); }
.tb1-in .btn { margin-top: -2px; }
.sep { display: block; flex: none; width: 1px; height: 17px; background: #b5b5b5; }
.grip { display: block; flex: none; width: 3px; height: 18px; background-image: radial-gradient(#999 1px, transparent 1.2px); background-size: 3px 4px; }
.g8 { margin-left: 8px; } .g10 { margin-left: 10px; } .g11 { margin-left: 10px; }
.more { flex: none; font-weight: 700; font-size: 14px; line-height: 14px; color: #222; align-self: flex-start; margin-top: 3px; }

/* main */
.main { height: 937px; flex: none; display: flex; }
.left { width: 255px; flex: none; display: flex; flex-direction: column; }
.ph { height: 16px; flex: none; display: flex; align-items: center; border: 1px solid #a8a8a8; border-left: 0; border-radius: 0 2px 2px 0; background: linear-gradient(#f6f6f6, #e8e8e8); white-space: nowrap; }
.ph-t { flex: 1; line-height: 14px; }
.pin { width: 9px; height: 11px; flex: none; }
.ph-x { width: 22px; text-align: center; font-size: 15px; color: #555; line-height: 12px; flex: none; }
.tabs { height: 20px; flex: none; margin-top: 1px; display: flex; border-bottom: 1px solid #a8a8a8; }
.tab { padding: 1px 3px; border: 1px solid #a8a8a8; border-bottom: 0; background: #e6e6e6; height: 20px; width: 92px; text-align: center; white-space: nowrap; margin-top: 3px; height: 17px; line-height: 14px; }
.tab.on { width: 69px; background: #fff; margin-top: 0; height: 20px; text-align: right; line-height: 18px; }
.ltb { height: 30px; flex: none; display: flex; align-items: center; padding-top: 5px; padding-bottom: 2px; border-right: 1px solid #b5b5b5; }
.lb { height: 21px; line-height: 19px; border: 1px solid #b5b5b5; background: linear-gradient(#f8f8f8, #e9e9e9); display: flex; align-items: center; justify-content: center; flex: none; }
.b1 { width: 44px; text-align: right; border-left: 0; justify-content: flex-end; padding-right: 3px; }
.b2 { width: 14px; }
.b3 { width: 58px; }
.b4 { width: 60px; }
.ltb .more { margin-left: 6px; margin-top: 0; }
.sheet { height: 375px; flex: none; display: flex; border-right: 1px solid #b5b5b5; padding-top: 2px; overflow: hidden; }
.sgrid { width: 216px; flex: none; }
.sr { height: 19px; display: grid; grid-template-columns: 8px 152px 55px; border-bottom: 1px solid #cfcfcf; white-space: nowrap; line-height: 18px; }
.sr > * { border-right: 1px solid #cfcfcf; overflow: hidden; }
.rn { background: #efefef; text-indent: -3px; color: #222; }
.sh { height: 25px; line-height: 24px; border: 0; }
.sh .sn { background: linear-gradient(#fae0b0, #f1b965); color: #7a0038; text-align: center; font-size: 13px; letter-spacing: 0; }
.sh .ss { background: linear-gradient(#fdfdfd, #e8e8e8); text-align: left; padding-left: 3px; }
.sh .rn { background: #f2f2f2; }
.ss { padding-left: 3px; background: #fff; }
.sn { background: #fff; position: relative; }
.l1 { padding-left: 21px; display: flex; align-items: center; }
.tog { display: inline-flex; align-items: center; justify-content: center; width: 12px; height: 12px; border: 1px solid #aaa; background: linear-gradient(#fff, #ddd); color: #222; line-height: 10px; font-size: 12px; flex: none; }
.l1 .tog { margin-left: -17px; margin-right: 5px; }
.y .sn, .y .ss { background: #ffff00; }
.l0 { padding-left: 3px; }
.ch { padding-left: 31px; }
.ch::before { content: ""; position: absolute; left: 9px; top: 0; bottom: 0; border-left: 1px solid #c8c800; }
.ch::after { content: ""; position: absolute; left: 9px; top: 9px; width: 16px; border-top: 1px solid #c8c800; }
.cur { position: relative; overflow: visible; }
.cur .rn { background: #f9cf8d; }
.cur .sn { outline: 2px solid #000; outline-offset: -2px; background: linear-gradient(#ffff66, #ffff00); overflow: visible; }
.vscroll { width: 17px; margin-left: 16px; flex: none; display: flex; flex-direction: column; align-items: center; background: #f0f0f0; }
.vscroll .up { margin-top: 8px; width: 0; height: 0; border: 4px solid transparent; border-bottom: 4px solid #444; border-top: 0; }
.thumb { width: 16px; height: 170px; margin-top: 5px; background: linear-gradient(90deg, #f0f0f0, #d8d8d8); border: 1px solid #b5b5b5; color: #666; text-align: center; line-height: 170px; font-size: 11px; }
.ph2 { margin-top: 13px; height: 20px; border-top: 1px solid #b5b5b5; border-bottom: 1px solid #c8c8c8; background: #f0f0f0; border-radius: 0; padding-left: 3px; }
.layers { flex: 1; background: #fff; border-right: 1px solid #b5b5b5; margin-bottom: 2px; padding-left: 7px; padding-top: 1px; }
.lay { display: flex; align-items: center; height: 14px; white-space: nowrap; }
.cb { width: 11px; height: 11px; border: 1px solid #8a9aa8; background: #d8e4f0; color: #345; font-size: 10px; line-height: 9px; margin-right: 4px; text-align: center; flex: none; }

/* center */
.center { width: 1046px; flex: none; display: flex; flex-direction: column; }
.bar { display: flex; align-items: center; flex: none; white-space: nowrap; }
.r2 { height: 25px; padding-top: 2px; background: linear-gradient(#fafafa, #f4f4f4); }
.combo { position: relative; height: 23px; line-height: 23px; background: #fff; flex: none; padding-left: 2px; }
.combo .ar { position: absolute; right: 2px; top: 9px; }
.c1 { width: 55px; margin-left: 0; }
.c2 { width: 70px; margin-left: 4px; padding-left: 3px; }
.c3 { width: 68px; margin-left: 3px; padding-left: 3px; }
.c4 { width: 69px; margin-left: 3px; padding-left: 3px; }
.c5 { width: 45px; padding-left: 0; }
.bp { width: 50px; padding-left: 5px; padding-right: 0; }
.r3 { height: 23px; margin-top: 5px; width: 866px; background: linear-gradient(#fafafa, #f4f4f4); }
.cad { display: block; flex: none; margin: 2px 0 0 5px; background: #000; }
.cad-t { font-family: "Liberation Sans", sans-serif; }
.cad-l { font-family: Roboto, "Liberation Sans", sans-serif; font-weight: 300; }
.cad-c { font-family: "Noto Sans CJK SC", sans-serif; }
.r4 { height: 29px; padding-top: 2px; }
.w75 { width: 75px; padding-left: 3px; padding-right: 0; } .w74 { width: 74px; padding-left: 3px; padding-right: 0; } .w51 { width: 51px; padding-left: 3px; padding-right: 0; }
.ic-a { margin-right: 4px; }
.lbl { color: #666; flex: none; }
.blk { color: #222; }
.spin { position: relative; height: 23px; line-height: 21px; border: 1px solid #9a9a9a; background: #f3f3f3; text-align: right; color: #666; padding-right: 16px; flex: none; }
.s58 { width: 58px; } .s68 { width: 68px; }
.sp { position: absolute; right: 4px; top: 3px; width: 7px; height: 15px; }
.sp::before, .sp::after { content: ""; position: absolute; left: 0; border: 3px solid transparent; }
.sp::before { top: 0; border-bottom: 4px solid #555; border-top: 0; }
.sp::after { bottom: 0; border-top: 4px solid #555; border-bottom: 0; }
.box { display: block; width: 12px; height: 12px; border: 1px solid #888; background: #f8f8f8; flex: none; }
.wline { height: 23px; flex: none; display: flex; align-items: center; padding-left: 5px; }
.xbox { width: 10px; height: 10px; border: 1px solid #844; line-height: 8px; font-size: 10px; text-align: center; color: #622; margin-top: -6px; }
.wtxt { margin-left: 18px; margin-top: 3px; font-size: 12px; }
.tablerow { height: 181px; flex: none; display: flex; }
.dots { display: block; width: 16px; flex: none; margin-left: 0; border-left: 2px solid #c8c8c8; background: radial-gradient(#aaa 1px, transparent 1.2px) 5px 0 / 4px 4px repeat-y, radial-gradient(#aaa 1px, transparent 1.2px) 9px 0 / 4px 4px repeat-y; }
.tpanel { flex: 1; background: #fff; border: 1px solid #a8a8a8; margin-right: 3px; padding: 1px 0 0 1px; }
.tg { display: grid; grid-template-columns: 22px 65px; grid-template-rows: 37px 19px 20px; width: 87px; }
.tc { display: block; text-align: center; line-height: 18px; border-right: 1px solid #c4c4c4; border-bottom: 1px solid #c4c4c4; }
.th0 { background: #f2f2f2; border: 0; }
.th1 { background: linear-gradient(#fadfb0, #f2bb68); }
.n1 { background: #f9cf8d; color: #7a0038; }
.n2 { background: #f2f2f2; }
.v1 { background: #dcebfb; }
.v2 { background: #c8fbd0; }

/* right */
.right { width: 430px; flex: none; display: flex; flex-direction: column; }
.rp { border-left: 1px solid #a8a8a8; margin-right: 2px; }
.pbox { height: 566px; flex: none; margin-right: 2px; border: 1px solid #a8a8a8; border-top: 0; background: #fff; padding: 2px 1px 0 1px; }
.pgrid { width: 424px; }
.pr { display: grid; grid-template-columns: 21px 121px 1fr; height: 19.080px; line-height: 18px; white-space: nowrap; border-bottom: 1px solid #c4c4c4; }
.pr > * { border-right: 1px solid #c4c4c4; overflow: hidden; position: relative; }
.pn { background: #f1f1f1; text-align: center; font-family: "Liberation Mono", monospace; font-size: 10px; color: #222; }
.pk { padding-left: 20px; display: flex; align-items: center; }
.pv { padding-left: 3px; }
.phd { height: 23px; line-height: 23px; border: 0; }
.phd .pn { background: #f2f2f2; }
.phd .pk { background: linear-gradient(#fdfdfd, #e8e8e8); padding-left: 36px; font-size: 13px; }
.phd .pv { background: linear-gradient(#fadfb0, #f2bb68); color: #7a0038; padding-left: 122px; font-size: 13px; }
.sel .pn { background: #f9cf8d; color: #a00030; }
.sel .pk { background: #3a96ee; color: #e8f4ff; }
.sel .pv { background: #dcebfb; }
.bl { color: #1010c0; }
.gr { color: #8c8c8c; }
.pk .tog { margin-left: -18px; margin-right: 5px; }
.kid { padding-left: 30px; color: #222; }
.kid.bl { color: #1010c0; }
.kid::before { content: ""; position: absolute; left: 9px; top: -1px; bottom: -1px; border-left: 1px solid #bbb; }
.kid::after { content: ""; position: absolute; left: 9px; top: 9px; width: 16px; border-top: 1px solid #bbb; }
.kid.last::before { bottom: 8px; }
.rebar { height: 325px; flex: none; margin-top: 4px; margin-right: 2px; border: 1px solid #a8a8a8; padding: 0 2px 2px 3px; display: flex; flex-direction: column; }
.rb-tb { height: 33px; display: flex; align-items: center; flex: none; padding-left: 2px; gap: 10px; padding-top: 3px; white-space: nowrap; }
.rb-tb .grip { margin-right: -2px; }
.rb-tb .sep { margin: 0 -3px; }
.rb-tb .rb-more { margin-left: 19px; align-self: flex-start; margin-top: 5px; }
.rb-tb2 { height: 28px; display: flex; align-items: center; flex: none; padding-left: 2px; padding-bottom: 1px; color: #666; }
.rb-l { margin-left: 6px; }
.rb-combo { margin-left: 3px; width: 132px; height: 23px; border: 1px solid #9a9a9a; background: #f6f6f6; display: flex; align-items: center; justify-content: flex-end; padding-right: 4px; }
.rb-cv { display: block; flex: 1; min-height: 0; width: 100%; background: #000; border: 2px solid #e5101e; }
.coords { height: 20px; flex: none; margin-top: 4px; display: flex; gap: 3px; }
.co1 { width: 146px; border: 1px solid #d0d0d0; font-family: "Liberation Mono", monospace; font-size: 10px; line-height: 18px; padding-left: 9px; }
.co2 { flex: 1; border: 1px solid #d0d0d0; border-right: 0; }

/* status */
.status { height: 15px; flex: none; display: flex; align-items: center; padding-top: 2px; border-top: 1px solid #c4c4c4; background: linear-gradient(#fbfbfb, #efefef); white-space: nowrap; }
.st { display: block; line-height: 14px; }
.st0 { width: 42px; }
.st1 { width: 101px; }
.st2 { width: 50px; }
.st3 { width: 1469px; }
.st4 { font-family: "Liberation Mono", monospace; font-size: 10px; border-left: 1px solid #c4c4c4; padding-left: 2px; }

/* dialog */
.dialog { position: absolute; left: 126px; top: 439px; width: 1126px; height: 328px; padding: 0 5px 5px 6px; display: flex; flex-direction: column;
  background: rgba(255,255,255,.2); -webkit-backdrop-filter: blur(10px); backdrop-filter: blur(10px);
  border: 1px solid rgba(210,210,210,.9); box-shadow: 0 0 6px rgba(0,0,0,.35); }
.dl-title { height: 25px; flex: none; display: flex; align-items: center; justify-content: space-between; padding-left: 2px; color: #222; }
.dl-x { width: 14px; height: 16px; margin-right: 2px; background: #3a3a3a; border: 1px solid #cfcfcf; color: #fff; font-weight: 700; font-size: 12px; line-height: 14px; text-align: center; }
.dl-in { flex: 1; display: flex; flex-direction: column; border: 1px solid #777; background: #f0f0f0; }
.dl-list { height: 207px; flex: none; background: #fff; }
.dl-h { height: 27px; display: flex; align-items: center; color: #333; }
.dl-r { height: 17px; display: flex; align-items: center; white-space: nowrap; color: #222; }
.dl-r span, .dl-h span { flex: none; }
.dl-r.on { background: linear-gradient(#e8f0fa, #c8dbf1); border: 1px solid #b0c8e4; border-width: 1px 0; margin-left: 3px; }
.dl-r.on .c-a { width: 72px; padding-left: 5px; }
.c-a { width: 75px; padding-left: 8px; }
.c-b { width: 91px; padding-left: 8px; }
.c-c { padding-left: 7px; }
.dl-h .c-b, .dl-h .c-c { border-left: 1px solid #e5e5e5; padding-left: 7px; }
.f { font-weight: 400; font-size: 11px; letter-spacing: .1px; }
.dl-sc { height: 16px; flex: none; display: flex; align-items: center; border-top: 1px solid #c8c8c8; border-bottom: 1px solid #aaa; background: #eee; color: #444; font-size: 14px; line-height: 14px; }
.dl-l { width: 20px; text-align: center; flex: none; }
.dl-th { flex: 1; height: 14px; background: linear-gradient(#f4f4f4, #d4d4d4); border: 1px solid #b0b0b0; text-align: center; font-size: 9px; line-height: 11px; color: #666; }
.dl-rr { width: 24px; text-align: center; flex: none; }
.dl-msg { flex: 1; padding: 3px 0 0 2px; line-height: 13px; color: #222; }
.ind { padding-left: 2px; }

/* overlays */
.scrawl { position: absolute; left: 0; top: 0; pointer-events: none; fill: none; stroke: #ef3a3e; stroke-width: 8; }
.ime { position: absolute; left: 1453px; top: 944px; width: 193px; height: 29px; display: flex; align-items: center; background: #e9f1fb; border-radius: 2px; color: #1565c0; }
.ime-s { width: 34px; height: 30px; margin-left: 4px; flex: none; }
.ime-d { width: 1px; height: 26px; background: #f3c0b0; margin-left: 8px; flex: none; }
.ime-t { margin-left: 8px; width: 22px; font-size: 17px; font-weight: 700; }
.ime-p { margin-left: 3px; width: 20px; font-size: 16px; font-weight: 700; line-height: 16px; }
.ime-i { width: 18px; height: 18px; flex: none; margin-left: 6px; }
.ball { position: absolute; left: 1713px; top: 890px; width: 44px; height: 44px; border-radius: 50%; background: radial-gradient(circle at 50% 30%, #70c870, #1f9a3a); border: 2px solid #e0e8e0; color: #fff; font-weight: 700; font-size: 13px; line-height: 40px; padding-left: 5px; }
```
